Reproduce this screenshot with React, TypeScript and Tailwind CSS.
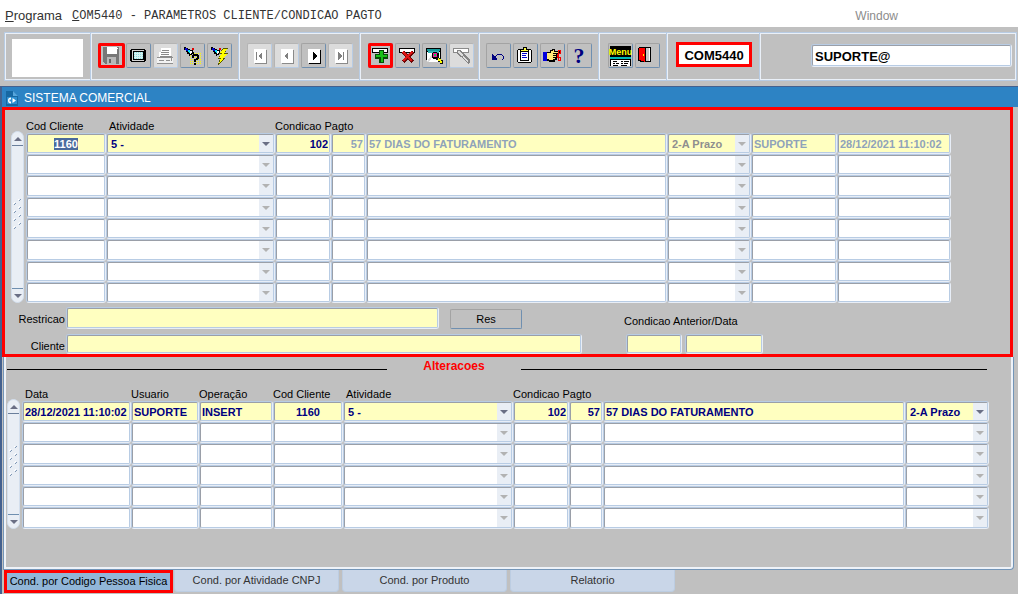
import { useEffect, useRef } from "react";
import type { ReactNode, Ref } from "react";

type Tone = "active" | "muted" | "gray";
type Align = "left" | "center" | "right";

interface Column {
  id: string;
  label: string;
  width: string;
  kind?: "select";
  align?: Align;
  value: string;
  tone?: Tone;
  picked?: boolean;
}

const customerColumns: Column[] = [
  { id: "cod", label: "Cod Cliente", width: "w-[80px]", align: "center", value: "1160", picked: true },
  { id: "atividade", label: "Atividade", width: "w-[169px]", kind: "select", value: "5 -" },
  { id: "cond", label: "Condicao Pagto", width: "w-[56px]", align: "right", value: "102" },
  { id: "dias", label: "Dias", width: "w-[35px]", align: "right", value: "57", tone: "muted" },
  { id: "desc", label: "Descricao", width: "w-auto", value: "57 DIAS DO FATURAMENTO", tone: "muted" },
  { id: "prazo", label: "Prazo", width: "w-[84px]", kind: "select", value: "2-A Prazo", tone: "gray" },
  { id: "usuario", label: "Usuario", width: "w-[86px]", value: "SUPORTE", tone: "muted" },
  { id: "data", label: "Data", width: "w-[114px]", value: "28/12/2021 11:10:02", tone: "muted" },
];

const changeColumns: Column[] = [
  { id: "data", label: "Data", width: "w-[109px]", value: "28/12/2021 11:10:02" },
  { id: "usuario", label: "Usuario", width: "w-[68px]", value: "SUPORTE" },
  { id: "operacao", label: "Operação", width: "w-[74px]", value: "INSERT" },
  { id: "cod", label: "Cod Cliente", width: "w-[70px]", align: "center", value: "1160" },
  { id: "atividade", label: "Atividade", width: "w-[170px]", kind: "select", value: "5 -" },
  { id: "cond", label: "Condicao Pagto", width: "w-[56px]", align: "right", value: "102" },
  { id: "dias", label: "Dias", width: "w-[34px]", align: "right", value: "57" },
  { id: "desc", label: "Descricao", width: "w-auto", value: "57 DIAS DO FATURAMENTO" },
  { id: "prazo", label: "Prazo", width: "w-[84px]", kind: "select", value: "2-A Prazo" },
];

const toneClass: Record<Tone, string> = {
  active: "text-[#000080]",
  muted: "text-[#8fa3ba]",
  gray: "text-[#8f8f8f]",
};

const alignClass: Record<Align, string> = {
  left: "text-left",
  center: "text-center",
  right: "text-right",
};

const fieldFrame =
  "rounded-[3px] border border-t-[#b8cce4] border-l-[#b8cce4] border-r-[#e8eef7] border-b-[#e8eef7]";
const fieldInner =
  "block h-full w-full appearance-none rounded-[2px] border border-t-[#9a9fa8] border-l-[#9a9fa8] border-r-[#b8cce4] border-b-[#b8cce4] outline-none";

function Triangle({ up, dim }: { up?: boolean; dim?: boolean }) {
  return (
    <svg width="8" height="4" viewBox="0 0 8 4" aria-hidden="true">
      <path d={up ? "M4 0L8 4H0Z" : "M0 0H8L4 4Z"} fill={dim ? "#b2b2b2" : "#6a6f85"} />
    </svg>
  );
}

function Cell({ column, first, name, inputRef }: { column: Column; first: boolean; name: string; inputRef?: Ref<HTMLInputElement> }) {
  const tone = toneClass[column.tone ?? "active"];
  const fill = first ? "bg-[#ffffc0]" : "bg-white";
  const value = first ? column.value : "";
  if (column.kind === "select") {
    return (
      <div className={`relative h-full ${fieldFrame}`}>
        <select
          aria-label={name}
          defaultValue={value}
          className={`${fieldInner} ${fill} ${tone} border-r-[#9a9fa8] border-b-[#9a9fa8] pt-px pl-[3px] leading-4 font-bold`}
        >
          <option value={value}>{value}</option>
        </select>
        <span className="pointer-events-none absolute inset-y-px right-px flex w-[14px] items-center justify-center bg-[#e9eef5]">
          <Triangle dim={!first || column.tone === "gray"} />
        </span>
      </div>
    );
  }
  return (
    <div className={`h-full ${fieldFrame}`}>
      <input
        ref={inputRef}
        type="text"
        aria-label={name}
        defaultValue={value}
        readOnly={column.tone === "muted"}
        className={`${fieldInner} ${fill} ${tone} ${alignClass[column.align ?? "left"]} px-px leading-4 font-bold selection:bg-[#4a6a9c] selection:text-white`}
      />
    </div>
  );
}

function DataGrid({ columns, rows, caption }: { columns: Column[]; rows: number; caption: string }) {
  const picked = useRef<HTMLInputElement>(null);
  useEffect(() => {
    picked.current?.focus({ preventScroll: true });
    picked.current?.select();
  }, []);
  const headers = columns.filter((c) => c.id !== "dias" && c.id !== "desc");
  const split = headers.findIndex((c) => c.id === "cond");
  return (
    <table aria-label={caption} className="w-full table-fixed border-collapse">
      <colgroup>
        {columns.map((c) => (
          <col key={c.id} className={c.width} />
        ))}
      </colgroup>
      <thead>
        <tr className="h-[14px]">
          {headers.slice(0, split + 1).map((c) => (
            <th
              key={c.id}
              colSpan={c.id === "cond" ? 3 : 1}
              className={`overflow-visible p-0 text-left leading-[14px] font-normal whitespace-nowrap ${c.id === "atividade" || c.label === "Data" ? "pl-[3px]" : ""}`}
            >
              {c.label}
            </th>
          ))}
          {headers.slice(split + 1).map((c) => (
            <th key={c.id} aria-label={c.label} className="p-0" />
          ))}
        </tr>
      </thead>
      <tbody>
        {Array.from({ length: rows }, (_, r) => (
          <tr key={r} className="h-[21px] nth-[3n]:h-[22px]">
            {columns.map((c) => (
              <td key={c.id} className="h-[inherit] p-0">
                <Cell column={c} first={r === 0} name={`${c.label} ${r + 1}`} inputRef={r === 0 && c.picked ? picked : undefined} />
              </td>
            ))}
          </tr>
        ))}
      </tbody>
    </table>
  );
}

function ScrollRail({ label }: { label: string }) {
  return (
    <div className="mt-3 flex w-[13px] shrink-0 flex-col rounded-full border border-[#d3dfee] bg-[#e9eef5]">
      <button type="button" aria-label={`${label}: subir`} className="flex h-[14px] items-center justify-center border-b border-[#6a7f9c]">
        <Triangle up />
      </button>
      <div className="flex flex-1 items-center justify-center">
        <svg width="9" height="36" viewBox="0 0 9 36" aria-hidden="true">
          {[0, 8, 16, 24].map((y) => (
            <g key={y}>
              <path d={`M1 ${y + 6}l2 -2M6 ${y + 2}l2 -2`} stroke="#7f97b5" />
              <path d={`M0 ${y + 5}l2 -2M5 ${y + 1}l2 -2`} stroke="#fff" />
            </g>
          ))}
        </svg>
      </div>
      <button type="button" aria-label={`${label}: descer`} className="flex h-[14px] items-center justify-center border-t border-[#6f8fb0]">
        <Triangle />
      </button>
    </div>
  );
}

function Tool({ label, disabled, className = "w-[25px]", children }: { label: string; disabled?: boolean; className?: string; children: ReactNode }) {
  return (
    <button
      type="button"
      aria-label={label}
      disabled={disabled}
      className={`flex h-[25px] shrink-0 items-center justify-center rounded-[2px] border ${
        disabled
          ? "border-t-[#b4b4b4] border-l-[#b4b4b4] border-r-[#b8cce4] border-b-[#b8cce4] bg-[#dcdcdc]"
          : "border-t-[#a3a3a3] border-l-[#a3a3a3] border-r-[#6f8fb0] border-b-[#6f8fb0]"
      } ${className}`}
    >
      <svg width="23" height="23" viewBox="1 1 23 23" shapeRendering="crispEdges" aria-hidden="true">
        {children}
      </svg>
    </button>
  );
}

function ToolGroup({ className, children }: { className: string; children: ReactNode }) {
  return (
    <div className={`flex shrink-0 items-start gap-[2px] border-l border-[#b8cce4] pt-[10px] shadow-[inset_1px_0_0_#eaf0f8] ${className}`}>
      {children}
    </div>
  );
}

function Torch() {
  return (
    <>
      <path d="M4 4h2v1h2v1h2v1h3v2h1v2h-2v1h-2v1H9v-2H7V9H6V7H4z" fill="#000" />
      <path d="M5 5h2v1h1v2H6V7H5z" fill="#0000d0" />
      <path d="M8 7h2v3H9V9H8z" fill="#00e0ff" />
      <path d="M10 8h2v2h-1v1h-1z" fill="#fff" />
      <path d="M12 5h2v2h-2z" fill="#e00000" />
    </>
  );
}

function PageArrow({ points, bar, active }: { points: string; bar?: number; active?: boolean }) {
  const ink = active ? "#000" : "#808080";
  return (
    <>
      <rect x="8" y="7" width="12" height="14" fill={active ? "#000" : "#8a8a8a"} />
      <rect x="7" y="6" width="12" height="14" fill="#fff" />
      <polygon points={points} fill={ink} />
      {bar !== undefined && <rect x={bar} y="9" width="1" height="8" fill={ink} />}
    </>
  );
}

function Toolbar() {
  return (
    <div className="bg-[#c0c0c0] pt-[5px] pr-px pb-[5px] pl-1">
      <div className="flex h-[49px] border border-[#b8cce4] shadow-[inset_0_0_0_1px_#eaf0f8]">
        <div className="w-[85px] shrink-0 pt-[6px] pl-[7px]">
          <div className="h-[38px] w-[71px] bg-white" />
        </div>
        <ToolGroup className="w-[148px] pl-[8px]">
          <Tool label="Salvar" className="-mx-px w-[27px] outline-3 -outline-offset-3 outline-[#ff0000]">
            <path d="M4 4h16v17H6l-2-2z" fill="#777" />
            <path d="M8 4h10v7H8z" fill="#fff" />
            <path d="M18 5h1v1h-1z" fill="#fff" />
            <path d="M8 14h9v7H8z" fill="#b8b8b8" />
            <path d="M10 16h2v4h-2z" fill="#666" />
          </Tool>
          <Tool label="Tela">
            <path d="M5 6h14v1h1v11h-1v1H5v-1H4V7h1z" fill="#000" />
            <path d="M6 7h12v11H6z" fill="#d4d4d4" />
            <path d="M7 8h11v9H7z" fill="#000" />
            <path d="M8 9h9v7H8z" fill="#d6f2f2" />
            {[9, 11, 13, 15].map((y) => (
              <path key={y} d={`M8 ${y}h1v1h-1zM10 ${y}h1v1h-1zM12 ${y}h1v1h-1zM14 ${y}h1v1h-1zM16 ${y}h1v1h-1z`} fill="#8edede" />
            ))}
          </Tool>
          <Tool label="Imprimir" disabled>
            <path d="M8 5h10v10H6V9h2z" fill="#fff" />
            <path d="M9 7h7v1H9zM8 9h8v1H8zM8 11h8v1H8zM7 13h12v1H7z" fill="#8a8a8a" />
            <path d="M4 15h16v5H4z" fill="#f2f2f2" />
            <path d="M4 14h16v1H4zM4 20h16v1H4zM6 17h5v1H6zM18 15h1v3h-1zM13 17h4v1h-4z" fill="#909090" />
          </Tool>
          <Tool label="Consultar">
            {[10, 12, 14, 16, 18, 20].map((y) => (
              <path
                key={y}
                d={`M10 ${y}h1v1h-1zM12 ${y}h1v1h-1zM14 ${y}h1v1h-1zM16 ${y}h1v1h-1zM18 ${y}h1v1h-1zM20 ${y}h1v1h-1z`}
                fill="#ffff00"
              />
            ))}
            <Torch />
            <path d="M13 11h5v1h1v4h-1v1h-2v2h-2v-3h2v-1h1v-2h-3v2h-2v-3h1zM14 20h2v2h-2z" fill="#000" />
          </Tool>
          <Tool label="Executar consulta">
            <Torch />
            <path d="M16 5h5l-3 5h3l-4 5h2l-8 7 2-6h-2l3-5h-2z" fill="#555500" />
            <path d="M16 6h4l-3 5h3l-5 5h2l-5 4 2-5h-2l3-5h-2z" fill="#ffff00" />
          </Tool>
        </ToolGroup>
        <ToolGroup className="w-[121px] pl-[8px]">
          <Tool label="Primeiro" disabled>
            <PageArrow points="15,9 15,17 11,13" bar={9} />
          </Tool>
          <Tool label="Anterior" disabled>
            <PageArrow points="14,9 14,17 10,13" />
          </Tool>
          <Tool label="Proximo">
            <PageArrow points="12,9 12,17 16,13" active />
          </Tool>
          <Tool label="Ultimo" disabled>
            <PageArrow points="10,9 10,17 14,13" bar={15} />
          </Tool>
        </ToolGroup>
        <ToolGroup className="w-[119px] pl-[8px]">
          <Tool label="Inserir registro" className="w-[25px] outline-3 -outline-offset-3 outline-[#ff0000]">
            <path d="M4 5h16v5H4z" fill="#000" />
            <path d="M5 6h14v3H5z" fill="#fff" />
            <path d="M11 7h5v4h4v5h-4v4h-5v-4H7v-5h4z" fill="#064d06" />
            <path d="M12 8h3v4h4v2h-4v5h-2v-5H8v-2h4z" fill="#18c018" />
          </Tool>
          <Tool label="Excluir registro">
            <path d="M4 5h16v5H4z" fill="#000" />
            <path d="M5 6h14v3H5z" fill="#fff" />
            <path d="M8 9L18 19M18 9L8 19" stroke="#6e0606" strokeWidth="4" />
            <path d="M8 9L17 18M17 9L8 18" stroke="#dd1414" strokeWidth="2" />
          </Tool>
          <Tool label="Localizar">
            <path d="M4 5h15v12H4z" fill="#000" />
            <path d="M5 6h13v2H5z" fill="#159a9a" />
            <path d="M5 9h13v10H5z" fill="#fff" />
            <path d="M6 8h11v2H6z" fill="#35b5b5" />
            <path d="M5 19l4-7h3l-5 7z" fill="#dcdcdc" />
            <path d="M11 9h4v1h2v5h-2v1h-4v-1h-1v-5h1z" fill="#000" />
            <path d="M11 10h4v4h-4z" fill="#f4149d" />
            <path d="M12 11h2v2h-2z" fill="#00c850" />
            <path d="M15 13h2v2h2v2h2v4h-3v-2h-2v-2h-2z" fill="#111" />
            <path d="M16 15h1v1h2v2h1v2h-2v-2h-2z" fill="#ffff00" />
          </Tool>
          <Tool label="Limpar" disabled>
            <path d="M4 5h16v5H4z" fill="#8a8a8a" />
            <path d="M5 6h14v3H5z" fill="#fff" />
            <path d="M8 7h4l3 4 6 6v3l-2 1-7-7-4-3z" fill="#858585" />
            <path d="M9 8h2l3 4-1 1-4-3zM14 13l5 5-1 1-4-5z" fill="#dedede" />
          </Tool>
        </ToolGroup>
        <ToolGroup className="w-[120px] pl-[7px]">
          <Tool label="Desfazer">
            <path d="M6 11h1v1h1v1h1v1h1v1h1v2H6z" fill="#000080" />
            <path d="M10 13v-1h1v-1h5v1h1v1h1v3h-1v1h-1v-1h1v-3h-1v-1h-5v1h-1v1H9v-1z" fill="#000080" />
          </Tool>
          <Tool label="Copiar">
            <path d="M5 6h13v1h1v12h-1v1H5v-1H4V7h1z" fill="#000" />
            <path d="M5 7h13v12H5z" fill="#fff" />
            <path d="M7 7h9v11H7z" fill="#000" />
            <path d="M8 9h7v8H8z" fill="#fff" />
            <path d="M10 4h4v2h2v3H7V6h3z" fill="#000" />
            <path d="M11 5h2v2h2v1H8V7h3z" fill="#ffff40" />
            <path d="M9 10h5v1H9zM9 12h4v1H9zM9 14h5v1H9z" fill="#0000d0" />
          </Tool>
          <Tool label="Editar">
            <path d="M3 9h4v9H3z" fill="#0000dd" />
            <path d="M7 9h3V7h2V6h3v2h5v3h-3v6h-2v2H9v-1H7z" fill="#000" />
            <path d="M7 10h4V8h2V7h1v2h5v1h-6v1h3v1h-3v1h3v1h-3v1h2v1h-2v1H9v-1H7z" fill="#ffe878" />
            <path d="M18 7h2v3h-2zM18 14h2v3h-2zM17 11h1v3h-1z" fill="none" stroke="#f00000" />
          </Tool>
          <Tool label="Ajuda">
            <text x="12" y="20" textAnchor="middle" fontSize="22" fontWeight="bold" fontFamily="Liberation Serif, serif" fill="#000080">
              ?
            </text>
          </Tool>
        </ToolGroup>
        <ToolGroup className="w-[68px] pl-[9px]">
          <Tool label="Menu">
            <path d="M2 3h21v11H2z" fill="#000" />
            <text x="12.500" y="12" textAnchor="middle" fontSize="9" fontWeight="bold" fontFamily="Liberation Sans, sans-serif" fill="#ffff00">
              Menu
            </text>
            <path d="M2 14h21v2H2z" fill="#00b8b8" />
            <path d="M2 16h21v7H2z" fill="#000" />
            <path d="M3 17h19v6H3z" fill="#fff" />
            <path d="M5 18h4v1H5zM13 18h2v1h-2zM16 18h5v1h-5zM5 20h2v1H5zM8 20h3v1H8zM13 20h2v1h-2zM16 20h4v1h-4zM5 22h5v1H5zM13 22h6v1h-6z" fill="#000" />
          </Tool>
          <Tool label="Sair">
            <path d="M4 4h12v15H6l-3-1V5z" fill="#000" />
            <path d="M11 5h4v13h-4z" fill="#c8c8c8" />
            <path d="M14 5h1v13h-1z" fill="#fff" />
            <path d="M4 5h6v14l-6-2z" fill="#ff0000" />
            <path d="M8 11h1v2H8z" fill="#ffff00" />
          </Tool>
        </ToolGroup>
        <ToolGroup className="w-[93px] pl-[9px]">
          <output className="-mt-px flex h-[25px] w-[76px] items-center justify-center border-3 border-[#ff0000] bg-white pt-[3px] text-[13px] font-bold">
            COM5440
          </output>
        </ToolGroup>
        <div className="flex flex-1 justify-end border-l border-[#b8cce4] pt-[11px] pr-[4px] pl-[51px] shadow-[inset_1px_0_0_#eaf0f8]">
          <div className={`h-[23px] flex-1 ${fieldFrame}`}>
            <input type="text" aria-label="Usuario conectado" defaultValue="SUPORTE@" className={`${fieldInner} bg-white px-[2px] pt-px text-[13px] font-bold`} />
          </div>
        </div>
      </div>
    </div>
  );
}

function Field({ id, label, className }: { id: string; label?: string; className: string }) {
  return (
    <div className={`shrink-0 ${fieldFrame} ${className}`}>
      <input id={id} type="text" aria-label={label} className={`${fieldInner} bg-[#ffffc0] px-px`} />
    </div>
  );
}

const tabs = ["Cond. por Codigo Pessoa Fisica", "Cond. por Atividade CNPJ", "Cond. por Produto", "Relatorio"];

export default function App() {
  return (
    <div className="min-h-screen bg-white pr-px font-['Liberation_Sans',Arial,sans-serif] text-[11px] text-black">
      <nav className="flex h-[27px] items-center bg-white pt-1 pl-[5px] text-[12px] text-[#333]">
        <a href="#programa" className="text-[13px]">
          <span className="underline">P</span>rograma
        </a>
        <a href="#parametros" className="ml-[10px] font-['Liberation_Mono','Courier_New',monospace] whitespace-pre">
          <span className="underline">C</span>OM5440 - PARAMETROS CLIENTE/CONDICAO PAGTO
        </a>
        <a href="#window" className="mr-[120px] ml-auto text-[#8c8c8c]">
          Window
        </a>
      </nav>
      <Toolbar />
      <div className="min-h-[508px] border-t border-l-2 border-t-[#44618f] border-l-[#44618f] bg-[#c0c0c0]">
        <header className="flex h-5 items-center gap-[6px] bg-[#2d83c4] pt-px pl-1 text-[12px] text-white">
          <svg width="12" height="16" viewBox="0 0 12 16" aria-hidden="true">
            <path d="M0 1h7l5 5v10H0z" fill="#1768a3" />
            <path d="M7 1v5h5z" fill="#58a6dc" />
            <rect x="1" y="7" width="10" height="7" fill="#2f8fd0" />
            <path d="M5 7.500A3 3 0 1 0 5 13.500V11.500H3.500V9.500H5ZM6.500 8L10 10.500 6.500 13Z" fill="#fff" />
          </svg>
          <h1>SISTEMA COMERCIAL</h1>
        </header>

        <section className="mr-[5px] border-3 border-[#ff0000] pt-[9px] pl-[6px]">
          <div className="mr-[59px] flex gap-[2px]">
            <ScrollRail label="Clientes" />
            <DataGrid columns={customerColumns} rows={8} caption="Clientes" />
          </div>
          <div className="mt-1 flex h-[22px] items-end">
            <label htmlFor="restricao" className="w-[55px] pr-px text-right leading-5">
              Restricao
            </label>
            <Field id="restricao" className="h-[22px] w-[373px]" />
            <button type="button" className="ml-[11px] h-[20px] w-[72px] rounded-[2px] border border-t-[#a3a3a3] border-l-[#a3a3a3] border-r-[#6f8fb0] border-b-[#6f8fb0]">
              Res
            </button>
            <label htmlFor="anterior" className="ml-[102px] leading-4">
              Condicao Anterior/Data
            </label>
          </div>
          <div className="mt-[5px] flex h-5 items-end">
            <label htmlFor="cliente" className="w-[55px] pr-px text-right leading-4">
              Cliente
            </label>
            <Field id="cliente" className="h-full w-[516px]" />
            <Field id="anterior" className="ml-[44px] h-full w-[56px]" />
            <Field id="anterior-data" label="Data anterior" className="ml-[3px] h-full w-[78px]" />
          </div>
        </section>

        <section className="mr-[4px] ml-px rounded-br-[4px] border-r border-b border-l border-[#7395b8] pb-[40px] pl-[3px] shadow-[inset_2px_-2px_0_#eef2f8,inset_-2px_0_0_#eef2f8]">
          <div className="mr-[26px] flex items-center">
            <div className="mt-[6px] h-px w-[380px] bg-black" />
            <h2 className="w-[134px] text-center text-[12px] leading-[18px] font-bold text-[#ff0000]">Alteracoes</h2>
            <div className="mt-[6px] h-px flex-1 bg-black" />
          </div>
          <div className="mt-3 mr-[24px] flex gap-[2px]">
            <ScrollRail label="Alteracoes" />
            <DataGrid columns={changeColumns} rows={6} caption="Alteracoes" />
          </div>
        </section>

        <div role="tablist" className="flex gap-[3px] pl-[2px]">
          {tabs.map((tab, i) => (
            <button
              key={tab}
              type="button"
              role="tab"
              aria-selected={i === 0}
              className={
                i === 0
                  ? "-mr-[2px] h-[23px] w-[169px] border-3 border-[#ff0000] bg-[#92b6d8] whitespace-nowrap"
                  : "h-[22px] w-[165px] rounded-b-[4px] border border-t-0 border-[#bccde2] bg-[#c9d6e8] text-[#333]"
              }
            >
              {tab}
            </button>
          ))}
        </div>
      </div>
    </div>
  );
}
